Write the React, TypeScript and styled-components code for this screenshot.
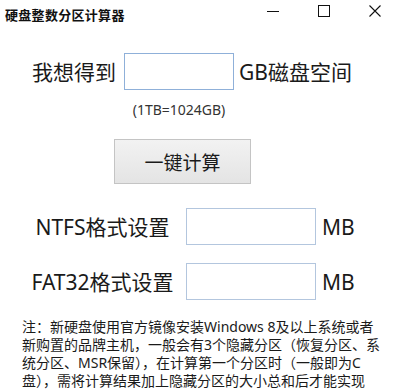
import React from "react";
import styled, { createGlobalStyle } from "styled-components";

const Global = createGlobalStyle`
  html, body { margin: 0; padding: 0; background: #ffffff; }
  body {
    font-family: "Noto Sans", "Noto Sans CJK SC", sans-serif;
    color: #1a1a1a;
    width: 400px;
    height: 391px;
    overflow: hidden;
  }
`;

const Window = styled.div`
  width: 400px;
  height: 391px;
  display: flex;
  flex-direction: column;
  background: #fff;
`;

const TitleBar = styled.div`
  height: 30px;
  display: flex;
  align-items: flex-start;
`;

const Title = styled.div`
  flex: 1;
  padding: 6px 0 0 5px;
  font-size: 13px;
  font-weight: 700;
  line-height: 18px;
  color: #111;
  letter-spacing: 0.3px;
`;

const Controls = styled.div`
  display: flex;
`;

const Ctrl = styled.div`
  width: 51px;
  height: 22px;
  display: flex;
  align-items: center;
  justify-content: center;
`;

const FirstRow = styled.div`
  margin-top: 23px;
  display: grid;
  grid-template-columns: 87px 110px auto;
  column-gap: 5px;
  padding-left: 32px;
  align-items: center;
`;

const BigLabel = styled.span`
  font-size: 21px;
  line-height: 28px;
  white-space: nowrap;
  color: #1a1a1a;
`;

const Field = styled.div<{ $focus?: boolean; $w: number }>`
  width: ${(p) => p.$w}px;
  height: 37px;
  box-sizing: border-box;
  border: 1px solid ${(p) => (p.$focus ? "#8fb0d9" : "#b3c6de")};
  background: #fff;
`;

const Hint = styled.div`
  grid-column: 2;
  text-align: center;
  font-size: 14px;
  line-height: 17px;
  margin-top: 11px;
  color: #333;
  white-space: nowrap;
`;

const ButtonRow = styled.div`
  margin-top: 21px;
  padding-left: 114px;
`;

const CalcButton = styled.div`
  width: 137px;
  height: 45px;
  box-sizing: border-box;
  border: 1px solid #c4c4c4;
  background: linear-gradient(#f2f2f2, #e4e4e4);
  display: flex;
  align-items: center;
  justify-content: center;
  font-size: 19px;
  color: #1a1a1a;
`;

const FormatGrid = styled.div`
  margin-top: 24px;
  display: grid;
  grid-template-columns: 155px 130px auto;
  column-gap: 6px;
  row-gap: 18px;
  padding-left: 25px;
  align-items: center;
`;

const FormatLabel = styled.span`
  text-align: center;
  font-size: 21px;
  line-height: 28px;
  white-space: nowrap;
`;

const Unit = styled.span`
  font-size: 21px;
  line-height: 28px;
`;

const Note = styled.div`
  margin-top: 18px;
  padding-left: 22px;
  font-size: 14px;
  line-height: 18px;
  color: #1a1a1a;
`;

const NoteLine = styled.div`
  white-space: nowrap;
`;

export default function App() {
  return (
    <Window>
      <Global />
      <TitleBar>
        <Title>硬盘整数分区计算器</Title>
        <Controls>
          <Ctrl>
            <svg width="12" height="12" viewBox="0 0 12 12">
              <path d="M0 6.5h12" stroke="#111" strokeWidth="1" />
            </svg>
          </Ctrl>
          <Ctrl>
            <svg width="12" height="12" viewBox="0 0 12 12">
              <rect x="0.5" y="0.5" width="11" height="11" fill="none" stroke="#111" strokeWidth="1" />
            </svg>
          </Ctrl>
          <Ctrl>
            <svg width="12" height="12" viewBox="0 0 12 12">
              <path d="M0.5 0.5L11.5 11.5M11.5 0.5L0.5 11.5" stroke="#111" strokeWidth="1.1" />
            </svg>
          </Ctrl>
        </Controls>
      </TitleBar>

      <FirstRow>
        <BigLabel>我想得到</BigLabel>
        <Field $focus $w={110} />
        <BigLabel>GB磁盘空间</BigLabel>
        <Hint>(1TB=1024GB)</Hint>
      </FirstRow>

      <ButtonRow>
        <CalcButton>一键计算</CalcButton>
      </ButtonRow>

      <FormatGrid>
        <FormatLabel>NTFS格式设置</FormatLabel>
        <Field $w={130} />
        <Unit>MB</Unit>
        <FormatLabel>FAT32格式设置</FormatLabel>
        <Field $w={130} />
        <Unit>MB</Unit>
      </FormatGrid>

      <Note>
        <NoteLine>注：新硬盘使用官方镜像安装Windows 8及以上系统或者</NoteLine>
        <NoteLine>新购置的品牌主机，一般会有3个隐藏分区（恢复分区、系</NoteLine>
        <NoteLine>统分区、MSR保留），在计算第一个分区时（一般即为C</NoteLine>
        <NoteLine>盘），需将计算结果加上隐藏分区的大小总和后才能实现</NoteLine>
      </Note>
    </Window>
  );
}
